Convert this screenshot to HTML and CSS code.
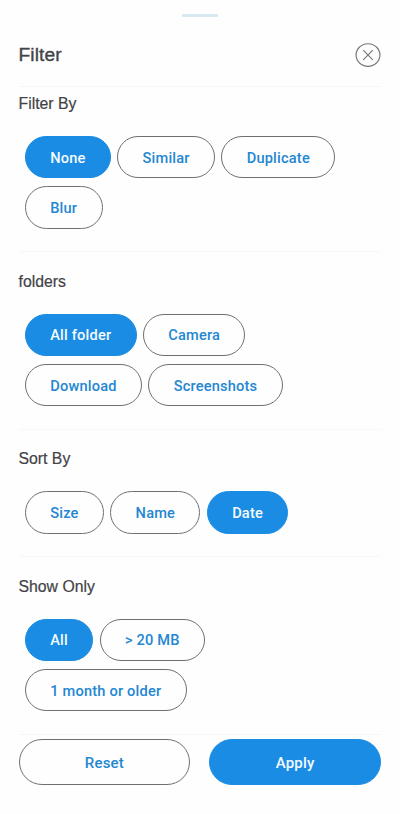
FILE: index.html
```html
<!DOCTYPE html>
<html lang="en">
<head>
<meta charset="utf-8">
<meta name="viewport" content="width=device-width, initial-scale=1">
<title>Filter</title>
<link rel="stylesheet" href="styles.css">
</head>
<body>
<main class="sheet">
  <div class="handle"></div>
  <header class="header">
    <h1 class="title">Filter</h1>
    <button class="close" aria-label="Close">
      <svg width="26" height="26" viewBox="0 0 26 26" fill="none" stroke="#77777b" stroke-width="1.15">
        <ellipse cx="13" cy="13" rx="11.9" ry="11.3"/>
        <path d="M8.2 8.2 17.8 17.8M17.8 8.2 8.2 17.8"/>
      </svg>
    </button>
  </header>
  <section class="group group-first">
    <h2 class="label">Filter By</h2>
    <div class="chips">
      <button class="chip chip-on">None</button>
      <button class="chip">Similar</button>
      <button class="chip">Duplicate</button>
      <button class="chip">Blur</button>
    </div>
  </section>
  <section class="group">
    <h2 class="label">folders</h2>
    <div class="chips chips-narrow">
      <button class="chip chip-on">All folder</button>
      <button class="chip">Camera</button>
      <button class="chip">Download</button>
      <button class="chip">Screenshots</button>
    </div>
  </section>
  <section class="group">
    <h2 class="label">Sort By</h2>
    <div class="chips">
      <button class="chip">Size</button>
      <button class="chip">Name</button>
      <button class="chip chip-on">Date</button>
    </div>
  </section>
  <section class="group">
    <h2 class="label">Show Only</h2>
    <div class="chips chips-narrow">
      <button class="chip chip-on">All</button>
      <button class="chip">&gt; 20 MB</button>
      <button class="chip">1 month or older</button>
    </div>
  </section>
  <footer class="actions">
    <button class="action">Reset</button>
    <button class="action action-primary">Apply</button>
  </footer>
</main>
</body>
</html>
```
FILE: styles.css
```css
* {
  box-sizing: border-box;
}

body {
  margin: 0;
  background: #fefefe;
  color: #434347;
  font-family: "Liberation Sans", Arial, sans-serif;
}

button {
  margin: 0;
  padding: 0;
  border: 0;
  background: none;
}

.sheet {
  height: 814px;
  padding: 14px 19px 0 18.5px;
  overflow: hidden;
}

.handle {
  width: 36px;
  height: 3px;
  margin: 0 auto;
  border-radius: 1px;
  background: #d8e8f0;
}

.header {
  display: flex;
  justify-content: space-between;
  height: 68.7px;
  padding-top: 25px;
}

.title {
  margin: 0;
  font-size: 19.2px;
  font-weight: 400;
  line-height: 26px;
  letter-spacing: 0.1px;
  -webkit-text-stroke: 0.35px currentColor;
}

.close {
  width: 26px;
  height: 26px;
}

.close svg {
  display: block;
}

.group {
  padding: 19.4px 0 22.5px;
  border-top: 1px solid #f7f7f8;
}

.group-first {
  padding-top: 7.2px;
}

.label {
  height: 20px;
  margin: 0 0 22px;
  font-size: 15.8px;
  font-weight: 400;
  line-height: 20px;
  -webkit-text-stroke: 0.2px currentColor;
}

.chips {
  display: flex;
  flex-wrap: wrap;
  gap: 8px 6.4px;
  padding-left: 6.4px;
}

.chips-narrow {
  max-width: 270px;
}

.group:nth-of-type(4) .chips-narrow {
  max-width: 200px;
}

.chip,
.action {
  padding: 1.6px 0 0;
  border: 1px solid #707074;
  color: #2387d2;
  font-family: Roboto, sans-serif;
  font-size: 15px;
  font-weight: 500;
  letter-spacing: 0.2px;
  white-space: nowrap;
}

.chip {
  height: 42.4px;
  padding: 1.2px 24.3px 0;
  border-radius: 22px;
  font-size: 14.6px;
}

.chip-on,
.action-primary {
  border-color: #1b8ce3;
  background: #1b8ce3;
  color: #f4fbff;
}

.actions {
  display: grid;
  grid-template-columns: 1fr 1fr;
  gap: 19px;
  padding-top: 4px;
  border-top: 1px solid #f7f7f8;
}

.action {
  height: 46px;
  border-radius: 23px;
}
```
